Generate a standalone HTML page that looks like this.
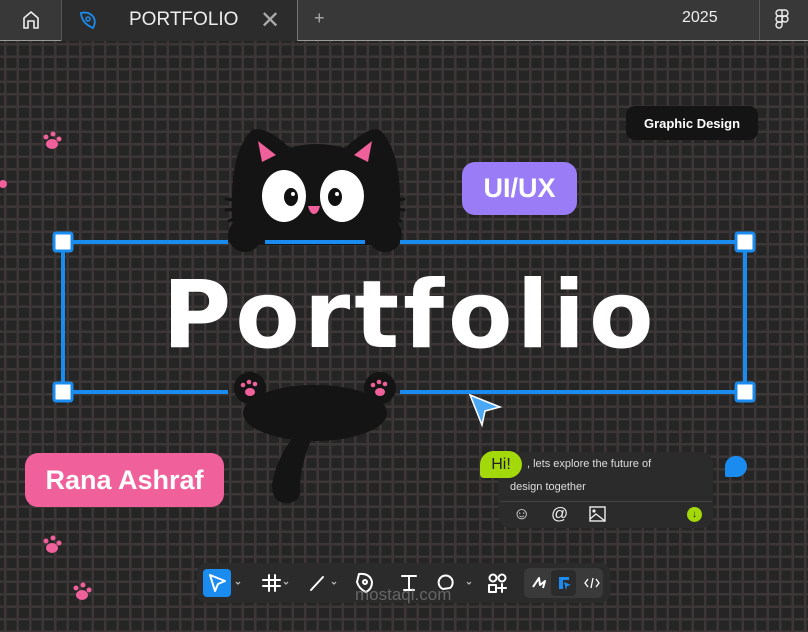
<!DOCTYPE html><html><head><style>
body{margin:0;width:808px;height:632px;overflow:hidden;font-family:"Liberation Sans",sans-serif;background:#252525;position:relative}
.grid{position:absolute;left:0;top:41px;width:808px;height:591px;background-color:#252525;background-image:linear-gradient(90deg,#3d3637 2.5px,transparent 2.5px),linear-gradient(#3d3637 2.5px,transparent 2.5px);background-size:12.5px 12.5px;background-position:4px 2px}
.top{position:absolute;left:0;top:0;width:808px;height:40px;background:#383838;border-bottom:1px solid #9a9a9a}
.tab{position:absolute;left:61px;top:0;width:235px;height:41px;background:#2c2c2c;border-left:1px solid #555;border-right:1px solid #777}
.abs{position:absolute}
.pill{position:absolute;display:flex;align-items:center;justify-content:center;font-weight:bold}
</style></head><body>
<div class="grid"></div>
<div class="top"></div>
<div class="tab"></div>
<svg class="abs" style="left:20px;top:9px" width="22" height="22" viewBox="0 0 22 22"><path d="M4 19V9L11 3L18 9V19H14V12H8V19Z" fill="none" stroke="#eee" stroke-width="1.6" stroke-linejoin="round"/></svg>
<svg class="abs" style="left:78px;top:9px" width="22" height="22" viewBox="0 0 22 22"><path d="M3 4Q12 2 16 9Q18 14 15 19Q8 16 5 11Q3 7 3 4Z" fill="none" stroke="#1a8cf0" stroke-width="1.8"/><circle cx="10" cy="10" r="2" fill="none" stroke="#1a8cf0" stroke-width="1.5"/></svg>
<div class="abs" style="left:129px;top:9px;color:#eee;font-size:19px">PORTFOLIO</div>
<div class="abs" style="left:260px;top:6px;color:#aaa;font-size:24px;font-weight:300">✕</div>
<div class="abs" style="left:314px;top:8px;color:#aaa;font-size:18px">+</div>
<div class="abs" style="left:682px;top:9px;color:#eee;font-size:16px">2025</div>
<div class="abs" style="left:759px;top:0;width:1px;height:40px;background:#555"></div>
<svg class="abs" style="left:775px;top:9px" width="14" height="22" viewBox="0 0 14 22"><g fill="none" stroke="#eee" stroke-width="1.4"><path d="M7 1H4A3 3 0 0 0 4 7H7ZM7 1H10A3 3 0 0 1 10 7H7Z"/><path d="M7 7H4A3 3 0 0 0 4 13H7Z"/><circle cx="10" cy="10" r="3"/><path d="M7 13H4A3 3 0 1 0 7 16Z"/></g></svg>

<div class="pill" style="left:626px;top:106px;width:132px;height:34px;background:#141414;border-radius:9px;color:#fff;font-size:13px">Graphic Design</div>
<div class="pill" style="left:462px;top:162px;width:115px;height:53px;background:#9a7cf6;border-radius:13px;color:#fff;font-size:27px">UI/UX</div>
<div class="pill" style="left:25px;top:453px;width:199px;height:54px;background:#f0609a;border-radius:13px;color:#fff;font-size:27px">Rana Ashraf</div>

<svg class="abs" style="left:0;top:0" width="808" height="632">
<g fill="#141414">
<path d="M232 200Q232 150 252 130Q265 125 290 148Q315 140 345 148Q370 125 380 130Q400 150 400 200Q402 235 385 245L245 245Q230 235 232 200Z"/>
<ellipse cx="315" cy="413" rx="72" ry="28"/>
<path d="M298 430Q275 460 272 485Q272 505 290 503Q302 500 300 488Q300 465 312 438Z"/>
<circle cx="250" cy="388" r="16"/><circle cx="380" cy="388" r="16"/>
<circle cx="245" cy="235" r="17"/><circle cx="385" cy="235" r="17"/>
</g>
<path d="M258 141L262 162L276 155Z" fill="#f0609a"/><path d="M372 141L368 162L354 155Z" fill="#f0609a"/>
<ellipse cx="284" cy="196" rx="22" ry="26" fill="#fff"/><ellipse cx="342" cy="196" rx="22" ry="26" fill="#fff"/>
<ellipse cx="291" cy="197" rx="7" ry="9" fill="#111"/><ellipse cx="335" cy="197" rx="7" ry="9" fill="#111"/>
<circle cx="293" cy="194" r="2" fill="#fff"/><circle cx="337" cy="194" r="2" fill="#fff"/>
<path d="M308 206H320Q318 214 314 214Q310 214 308 206Z" fill="#f0609a"/>
<g stroke="#141414" stroke-width="3" stroke-linecap="round"><path d="M226 199L240 201M226 210L240 209M229 221L240 216M390 201L404 199M390 209L404 210M390 216L401 221"/></g>
<g fill="none" stroke="#1a8cf0" stroke-width="4"><path d="M63 242H228M400 242H745V392H400M228 392H63V242"/></g>
<path d="M265 242H365" stroke="#1a8cf0" stroke-width="4"/>
<g fill="#f0609a"><ellipse cx="250" cy="392" rx="5" ry="4"/><circle cx="243" cy="385" r="2.3"/><circle cx="249" cy="382" r="2.3"/><circle cx="255" cy="384" r="2.3"/><ellipse cx="380" cy="392" rx="5" ry="4"/><circle cx="373" cy="385" r="2.3"/><circle cx="379" cy="382" r="2.3"/><circle cx="385" cy="384" r="2.3"/></g>
<g fill="#fff" stroke="#1a8cf0" stroke-width="3"><rect x="54" y="233" width="18" height="18" rx="2"/><rect x="736" y="233" width="18" height="18" rx="2"/><rect x="54" y="383" width="18" height="18" rx="2"/><rect x="736" y="383" width="18" height="18" rx="2"/></g>
<path d="M470 395L500 407L485 411L482 425Z" fill="#4aa8f5" stroke="#fff" stroke-width="1.5"/>
<g fill="#f0609a">
<g transform="translate(52,141)"><ellipse cx="0" cy="3" rx="6" ry="5"/><circle cx="-6" cy="-4" r="2.5"/><circle cx="1" cy="-7" r="2.5"/><circle cx="7" cy="-2" r="2.5"/></g>
<g transform="translate(52,545)"><ellipse cx="0" cy="3" rx="6" ry="5"/><circle cx="-6" cy="-4" r="2.5"/><circle cx="1" cy="-7" r="2.5"/><circle cx="7" cy="-2" r="2.5"/></g>
<g transform="translate(82,592)"><ellipse cx="0" cy="3" rx="6" ry="5"/><circle cx="-6" cy="-4" r="2.5"/><circle cx="1" cy="-7" r="2.5"/><circle cx="7" cy="-2" r="2.5"/></g>
<circle cx="3" cy="184" r="4"/>
</g>
</svg>
<div class="abs" style="left:150px;top:256px;width:520px;text-align:center;color:#fff;font-family:'DejaVu Sans',sans-serif;font-weight:bold;font-size:94px;letter-spacing:4px;line-height:120px">Portfolio</div>

<div class="abs" style="left:498px;top:452px;width:215px;height:76px;background:#2b2b2b;border-radius:12px"></div>
<div class="abs" style="left:500px;top:501px;width:212px;height:1px;background:#444"></div>
<div class="pill" style="left:480px;top:451px;width:42px;height:27px;background:#a3d80a;border-radius:14px 14px 14px 4px;color:#222;font-size:16px;font-weight:normal">Hi!</div>
<div class="abs" style="left:527px;top:458px;color:#ddd;font-size:11px">, lets explore the future of</div>
<div class="abs" style="left:510px;top:481px;color:#ddd;font-size:11px">design together</div>
<div class="abs" style="left:513px;top:504px;color:#eee;font-size:17px">☺</div>
<div class="abs" style="left:551px;top:504px;color:#eee;font-size:17px">@</div>
<svg class="abs" style="left:589px;top:506px" width="18" height="17"><rect x="1" y="1" width="15" height="14" fill="none" stroke="#eee" stroke-width="1.4"/><circle cx="5" cy="5" r="1.6" fill="#eee"/><path d="M1 13L7 8L16 15" fill="none" stroke="#eee" stroke-width="1.4"/></svg>
<div class="abs" style="left:687px;top:507px;width:15px;height:15px;border-radius:50%;background:#a3d80a;color:#222;font-size:10px;text-align:center;line-height:15px">↓</div>
<div class="abs" style="left:725px;top:456px;width:22px;height:21px;background:#1a8cf0;border-radius:11px 11px 11px 2px"></div>

<div class="abs" style="left:197px;top:563px;width:413px;height:40px;background:#2b2b2b;border-radius:10px"></div>
<div class="abs" style="left:203px;top:569px;width:28px;height:28px;background:#1a8cf0;border-radius:4px"></div>
<svg class="abs" style="left:197px;top:563px" width="413" height="40">
<g fill="none" stroke="#fff" stroke-width="2" stroke-linejoin="round" stroke-linecap="round">
<path d="M13 12L28 18L21 21L18 28Z"/>
<path d="M72 12V28M78 12V28M66 17H83M66 23H83"/>
<path d="M114 27L126 14"/>
<path d="M162 11Q173 10 175 19Q175 26 169 29Q162 26 160 19Z"/><circle cx="168" cy="19" r="2"/>
<path d="M205 13H219M212 13V27M207 27H217"/>
<path d="M246 26A7 7 0 1 1 253 25Z"/>
<circle cx="296" cy="15" r="3.5"/><circle cx="305" cy="15" r="3.5"/><rect x="292" y="22" width="7" height="7"/><path d="M305 21V29M301 25H309"/>
</g>
<g fill="none" stroke="#bbb" stroke-width="1.2"><path d="M39 19L41 21L43 19M87 19L89 21L91 19M135 19L137 21L139 19M270 19L272 21L274 19"/></g>
<rect x="327" y="5" width="79" height="30" rx="6" fill="#3a3a3a"/>
<rect x="354" y="7" width="25" height="26" rx="4" fill="#2b2b2b"/>
<path d="M336 24L342 15L343 22L348 18L346 25" fill="none" stroke="#fff" stroke-width="2" stroke-linejoin="round"/>
<path d="M362 14H372V17H366V26H362Z" fill="#1a8cf0"/><path d="M367 19L374 22L370 23L369 27Z" fill="#1a8cf0"/>
<path d="M391 16L388 20L391 24M399 16L402 20L399 24M396 15L394 25" fill="none" stroke="#fff" stroke-width="1.3"/>
</svg>
<div class="abs" style="left:355px;top:585px;color:rgba(150,150,150,0.55);font-size:17px">mostaql.com</div>
</body></html>
